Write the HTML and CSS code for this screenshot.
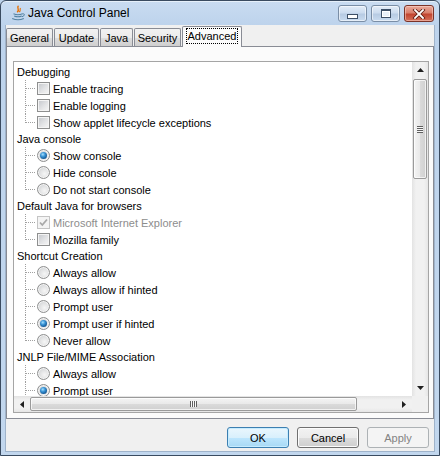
FILE: index.html
```html
<!DOCTYPE html>
<html>
<head>
<meta charset="utf-8">
<title>Java Control Panel</title>
<link rel="stylesheet" href="styles.css">
</head>
<body>
<div class="window">
  <div class="titlebar">
    <svg class="app-icon" width="16" height="16" viewBox="0 0 16 16">
      <path d="M8.5 0.8 C6 3, 10.5 4, 7.2 7.2" fill="none" stroke="#e76f00" stroke-width="1.4"/>
      <path d="M10.6 3.2 C9 4.6, 11.6 5.2, 9.2 7" fill="none" stroke="#e76f00" stroke-width="1.1"/>
      <path d="M3.5 8.8 Q8 10.6 12.5 8.8" fill="none" stroke="#5382a1" stroke-width="1.1"/>
      <path d="M4.2 11 Q8 12.6 11.8 11" fill="none" stroke="#5382a1" stroke-width="1.1"/>
      <path d="M12.4 8.8 Q15.4 8.6 13.8 10.8 L12 11.8" fill="none" stroke="#5382a1" stroke-width="1"/>
      <path d="M2.2 13.4 Q8 16 13.8 13.4" fill="none" stroke="#5382a1" stroke-width="1.1"/>
    </svg>
    <span class="title">Java Control Panel</span>
    <div class="caption-buttons">
      <div class="cap cap-min"><span class="min-glyph"></span></div>
      <div class="cap cap-max"><span class="max-glyph"></span></div>
      <div class="cap cap-close">
        <svg width="14" height="10" viewBox="0 0 14 10">
          <path d="M3 1 L11 9 M11 1 L3 9" stroke="#5a1a10" stroke-width="3.4" stroke-linecap="square"/>
          <path d="M3 1 L11 9 M11 1 L3 9" stroke="#ffffff" stroke-width="1.8" stroke-linecap="square"/>
        </svg>
      </div>
    </div>
  </div>
  <div class="client">
    <div class="tabs">
      <div class="tab t-general">General</div>
      <div class="tab t-update">Update</div>
      <div class="tab t-java">Java</div>
      <div class="tab t-security">Security</div>
      <div class="tab t-advanced selected"><span class="focus">Advanced</span></div>
    </div>
    <div class="panel">
      <div class="scrollpane">
        <div class="viewport">
          <div class="tree">
            <div class="node">Debugging</div>
            <ul class="kids">
              <li class="leaf"><span class="cb"></span><span>Enable tracing</span></li>
              <li class="leaf"><span class="cb"></span><span>Enable logging</span></li>
              <li class="leaf"><span class="cb"></span><span>Show applet lifecycle exceptions</span></li>
            </ul>
            <div class="node">Java console</div>
            <ul class="kids">
              <li class="leaf"><span class="rb on"><span class="dot"></span></span><span>Show console</span></li>
              <li class="leaf"><span class="rb"></span><span>Hide console</span></li>
              <li class="leaf"><span class="rb"></span><span>Do not start console</span></li>
            </ul>
            <div class="node">Default Java for browsers</div>
            <ul class="kids">
              <li class="leaf disabled"><span class="cb cb-dis">
                <svg width="11" height="11" viewBox="0 0 11 11"><path d="M2 5.5 L4.3 8 L9 2.5" fill="none" stroke="#a9a9a9" stroke-width="1.8"/></svg>
              </span><span>Microsoft Internet Explorer</span></li>
              <li class="leaf"><span class="cb"></span><span>Mozilla family</span></li>
            </ul>
            <div class="node">Shortcut Creation</div>
            <ul class="kids">
              <li class="leaf"><span class="rb"></span><span>Always allow</span></li>
              <li class="leaf"><span class="rb"></span><span>Always allow if hinted</span></li>
              <li class="leaf"><span class="rb"></span><span>Prompt user</span></li>
              <li class="leaf"><span class="rb on"><span class="dot"></span></span><span>Prompt user if hinted</span></li>
              <li class="leaf"><span class="rb"></span><span>Never allow</span></li>
            </ul>
            <div class="node">JNLP File/MIME Association</div>
            <ul class="kids">
              <li class="leaf"><span class="rb"></span><span>Always allow</span></li>
              <li class="leaf"><span class="rb on"><span class="dot"></span></span><span>Prompt user</span></li>
              <li class="leaf"><span class="rb"></span><span>Never allow</span></li>
            </ul>
          </div>
        </div>
        <div class="vscroll">
          <div class="sbtn">
            <svg width="7" height="4" viewBox="0 0 7 4"><polygon points="0,4 7,4 3.5,0" fill="#202020"/></svg>
          </div>
          <div class="vthumb"><span class="vgrip"></span></div>
          <div class="vtrack-rest"></div>
          <div class="sbtn">
            <svg width="7" height="4" viewBox="0 0 7 4"><polygon points="0,0 7,0 3.5,4" fill="#202020"/></svg>
          </div>
        </div>
        <div class="hscroll">
          <div class="sbtn">
            <svg width="4" height="7" viewBox="0 0 4 7"><polygon points="4,0 4,7 0,3.5" fill="#202020"/></svg>
          </div>
          <div class="hthumb"><span class="hgrip"></span></div>
          <div class="htrack-rest"></div>
          <div class="sbtn">
            <svg width="4" height="7" viewBox="0 0 4 7"><polygon points="0,0 0,7 4,3.5" fill="#202020"/></svg>
          </div>
        </div>
        <div class="corner"></div>
      </div>
    </div>
    <div class="buttons">
      <div class="btn btn-default">OK</div>
      <div class="btn">Cancel</div>
      <div class="btn btn-disabled">Apply</div>
    </div>
  </div>
</div>
</body>
</html>
```

FILE: styles.css
```css
html, body {
  margin: 0;
  padding: 0;
}
body {
  width: 440px;
  height: 456px;
  overflow: hidden;
  font-family: "Liberation Sans", Arial, sans-serif;
  font-size: 11px;
  color: #000;
  background: #bcd2ea;
}
.window {
  width: 440px;
  height: 456px;
  box-sizing: border-box;
  display: flex;
  flex-direction: column;
  border: 1px solid #3a4b60;
  border-radius: 6px 6px 0 0;
  padding: 0 4px 3px 4px;
  background: linear-gradient(to bottom, #c9dcf1 0px, #bdd3ec 24px, #c2d7ee 100%);
  box-shadow: inset 0 1px 0 #e6f0fa;
}
.titlebar {
  height: 24px;
  display: flex;
  align-items: center;
  flex: none;
}
.app-icon {
  margin-left: 5px;
  flex: none;
}
.title {
  margin-left: 2px;
  font-size: 12px;
  color: #000;
}
.caption-buttons {
  margin-left: auto;
  margin-right: 1px;
  align-self: flex-start;
  margin-top: 4px;
  display: flex;
  gap: 4px;
}
.cap {
  width: 29px;
  height: 17px;
  box-sizing: border-box;
  border: 1px solid #7a8ea6;
  border-radius: 3px;
  background: linear-gradient(to bottom, #e3edf8 0%, #ccdcef 45%, #b7cbe3 55%, #c9dcf0 100%);
  box-shadow: inset 0 0 0 1px rgba(255,255,255,0.55);
  display: flex;
  align-items: center;
  justify-content: center;
}
.cap-close {
  width: 30px;
  border-color: #7b3328;
  background: linear-gradient(to bottom, #e9a99b 0%, #d9806d 45%, #c24530 55%, #d4705a 100%);
  box-shadow: inset 0 0 0 1px rgba(255,220,210,0.5);
}
.min-glyph {
  width: 9px;
  height: 3px;
  margin-top: 6px;
  background: #fff;
  border: 1px solid #3d4f66;
}
.max-glyph {
  width: 8px;
  height: 6px;
  border: 1px solid #3d4f66;
  border-top-width: 2px;
  background: #e9f0f8;
  box-shadow: inset 0 0 0 1px #fff;
}
.client {
  flex: 1;
  background: #f0f0f0;
  display: flex;
  flex-direction: column;
  padding: 1px 1px 0 1px;
  box-shadow: inset 1px 0 0 #9fb3ca, inset -1px 0 0 #9fb3ca, inset 0 -1px 0 #9fb3ca;
}
.tabs {
  display: flex;
  align-items: flex-start;
  height: 21px;
  gap: 1px;
  position: relative;
  z-index: 1;
  flex: none;
}
.tab {
  height: 18px;
  margin-top: 2px;
  box-sizing: border-box;
  border: 1px solid #898c95;
  border-bottom: none;
  border-radius: 2px 2px 0 0;
  background: linear-gradient(to bottom, #f2f2f2 0%, #ebebeb 50%, #dddddd 51%, #cfcfcf 100%);
  display: flex;
  align-items: center;
  justify-content: center;
  padding-top: 1px;
}
.t-general { width: 47px; }
.t-update { width: 45px; }
.t-java { width: 33px; }
.t-security { width: 47px; }
.tab.selected {
  width: 60px;
  height: 21px;
  margin-top: 0;
  background: #fbfbfb;
  padding-top: 0;
  padding-bottom: 2px;
}
.focus {
  border: 1px dotted #000;
  padding: 1px 1px;
  line-height: 12px;
}
.panel {
  height: 373px;
  box-sizing: border-box;
  margin-top: -1px;
  border: 1px solid #898c95;
  background: #fbfbfb;
  padding: 14px 4px 5px 6px;
  flex: none;
}
.scrollpane {
  height: 100%;
  box-sizing: border-box;
  border: 1px solid #a5a5a5;
  display: grid;
  grid-template-columns: 1fr 16px;
  grid-template-rows: 1fr 16px;
  background: #fff;
}
.viewport {
  overflow: hidden;
  background: #fff;
}
.tree {
  padding-top: 2px;
  width: 460px;
}
.node {
  height: 16px;
  line-height: 16px;
  padding-left: 3px;
  white-space: nowrap;
}
.kids {
  list-style: none;
  margin: 0;
  padding: 0;
}
.leaf {
  height: 17px;
  display: flex;
  align-items: center;
  gap: 3px;
  padding-left: 23px;
  white-space: nowrap;
  background-image:
    repeating-linear-gradient(to bottom, #a0a0a0 0 1px, transparent 1px 2px),
    repeating-linear-gradient(to right, #a0a0a0 0 1px, transparent 1px 2px);
  background-size: 1px 17px, 10px 1px;
  background-position: 11px 0, 12px 8px;
  background-repeat: no-repeat;
}
.leaf:last-child {
  background-size: 1px 9px, 10px 1px;
}
.leaf.disabled {
  color: #8d8d8d;
}
.cb {
  width: 13px;
  height: 13px;
  box-sizing: border-box;
  border: 1px solid #8e8f8f;
  background: linear-gradient(135deg, #c3c6cb 0%, #e3e4e6 55%, #f7f7f7 100%);
  box-shadow: inset 0 0 0 1px #f4f4f4;
  flex: none;
  display: flex;
  align-items: center;
  justify-content: center;
}
.cb-dis {
  border-color: #c4c4c4;
  background: #f4f4f4;
  box-shadow: none;
}
.rb {
  width: 13px;
  height: 13px;
  box-sizing: border-box;
  border-radius: 50%;
  border: 1px solid #8e8f8f;
  background: radial-gradient(circle at 60% 62%, #f6f6f6 0, #e2e3e4 45%, #c4c6c9 100%);
  box-shadow: inset 0 0 0 1px #f4f4f4;
  flex: none;
  display: flex;
  align-items: center;
  justify-content: center;
}
.dot {
  width: 7px;
  height: 7px;
  border-radius: 50%;
  background: radial-gradient(circle at 40% 35%, #a6e0ff 0, #3b95d6 35%, #0d4d8a 80%, #0a3a6a 100%);
}
.vscroll {
  display: flex;
  flex-direction: column;
  background: linear-gradient(to right, #e3e3e3 0, #f1f1f1 25%, #f1f1f1 75%, #e6e6e6 100%);
}
.hscroll {
  display: flex;
  background: linear-gradient(to bottom, #e3e3e3 0, #f1f1f1 25%, #f1f1f1 75%, #e6e6e6 100%);
}
.sbtn {
  width: 16px;
  height: 16px;
  flex: none;
  display: flex;
  align-items: center;
  justify-content: center;
}
.vthumb {
  margin: 1px 1px 0 1px;
  height: 100px;
  flex: none;
  box-sizing: border-box;
  border: 1px solid #9a9a9a;
  border-radius: 2px;
  background: linear-gradient(to right, #f4f4f4 0%, #e9e9e9 50%, #dadada 51%, #d0d0d0 100%);
  box-shadow: inset 0 0 0 1px rgba(255,255,255,0.7);
  display: flex;
  align-items: center;
  justify-content: center;
}
.vgrip {
  width: 6px;
  height: 7px;
  background: repeating-linear-gradient(to bottom, #5f5f5f 0 1px, #f8f8f8 1px 2px);
}
.vtrack-rest, .htrack-rest {
  flex: 1;
}
.hthumb {
  margin: 1px 0 1px 0;
  width: 327px;
  flex: none;
  box-sizing: border-box;
  border: 1px solid #9a9a9a;
  border-radius: 2px;
  background: linear-gradient(to bottom, #f4f4f4 0%, #e9e9e9 50%, #dadada 51%, #d0d0d0 100%);
  box-shadow: inset 0 0 0 1px rgba(255,255,255,0.7);
  display: flex;
  align-items: center;
  justify-content: center;
}
.hgrip {
  width: 7px;
  height: 6px;
  background: repeating-linear-gradient(to right, #5f5f5f 0 1px, #f8f8f8 1px 2px);
}
.corner {
  background: #f0f0f0;
}
.buttons {
  display: flex;
  justify-content: flex-end;
  gap: 8px;
  padding: 8px 5px 0 0;
}
.btn {
  width: 62px;
  height: 21px;
  box-sizing: border-box;
  border: 1px solid #707070;
  border-radius: 3px;
  background: linear-gradient(to bottom, #f2f2f2 0%, #ebebeb 50%, #dddddd 51%, #cfcfcf 100%);
  box-shadow: inset 0 0 0 1px #fcfcfc;
  display: flex;
  align-items: center;
  justify-content: center;
}
.btn-default {
  border-color: #3c7fb1;
  background: linear-gradient(to bottom, #eaf6fd 0%, #d9f0fc 50%, #bee6fd 51%, #a7d9f5 100%);
  box-shadow: inset 0 0 0 1px #c6ecff;
}
.btn-disabled {
  border-color: #adb2b5;
  background: #f4f4f4;
  box-shadow: none;
  color: #838383;
}
```
